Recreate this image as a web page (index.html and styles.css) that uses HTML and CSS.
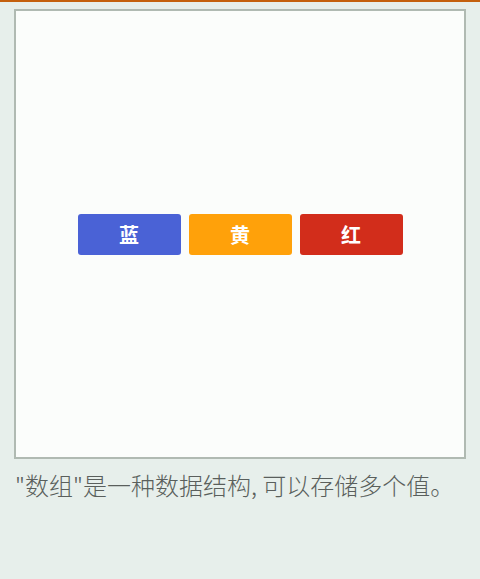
FILE: index.html
```html
<!DOCTYPE html>
<html>
<head>
<meta charset="utf-8">
<link rel="stylesheet" href="styles.css">
</head>
<body>
<div class="topbar"></div>
<div class="page">
  <div class="stage">
    <div class="row">
      <div class="btn blue">蓝</div>
      <div class="btn yellow">黄</div>
      <div class="btn red">红</div>
    </div>
  </div>
  <p class="caption">"数组"是一种数据结构, 可以存储多个值。</p>
</div>
</body>
</html>
```
FILE: styles.css
```css
html, body {
  margin: 0;
  padding: 0;
  background: #e7efeb;
  width: 480px;
  height: 579px;
  overflow: hidden;
  font-family: "Noto Sans CJK SC", "Noto Sans", sans-serif;
}
.topbar {
  height: 2px;
  background: #c4600e;
}
.page {
  padding: 7px 14px 0 14px;
}
.stage {
  width: 448px;
  height: 446px;
  border: 2px solid #b0bab2;
  background: #fbfdfb;
  display: flex;
  align-items: center;
  justify-content: center;
}
.row {
  display: flex;
  gap: 8px;
}
.btn {
  width: 103px;
  height: 41px;
  border-radius: 3px;
  color: #fff;
  font-weight: bold;
  font-size: 20px;
  display: flex;
  align-items: center;
  justify-content: center;
}
.blue { background: #4a62d6; }
.yellow { background: #ffa10a; }
.red { background: #d22d1b; }
.caption {
  margin: 11px 0 0 1px;
  font-size: 24px;
  font-weight: 300;
  color: #5a5f5c;
  line-height: 30px;
}
```
